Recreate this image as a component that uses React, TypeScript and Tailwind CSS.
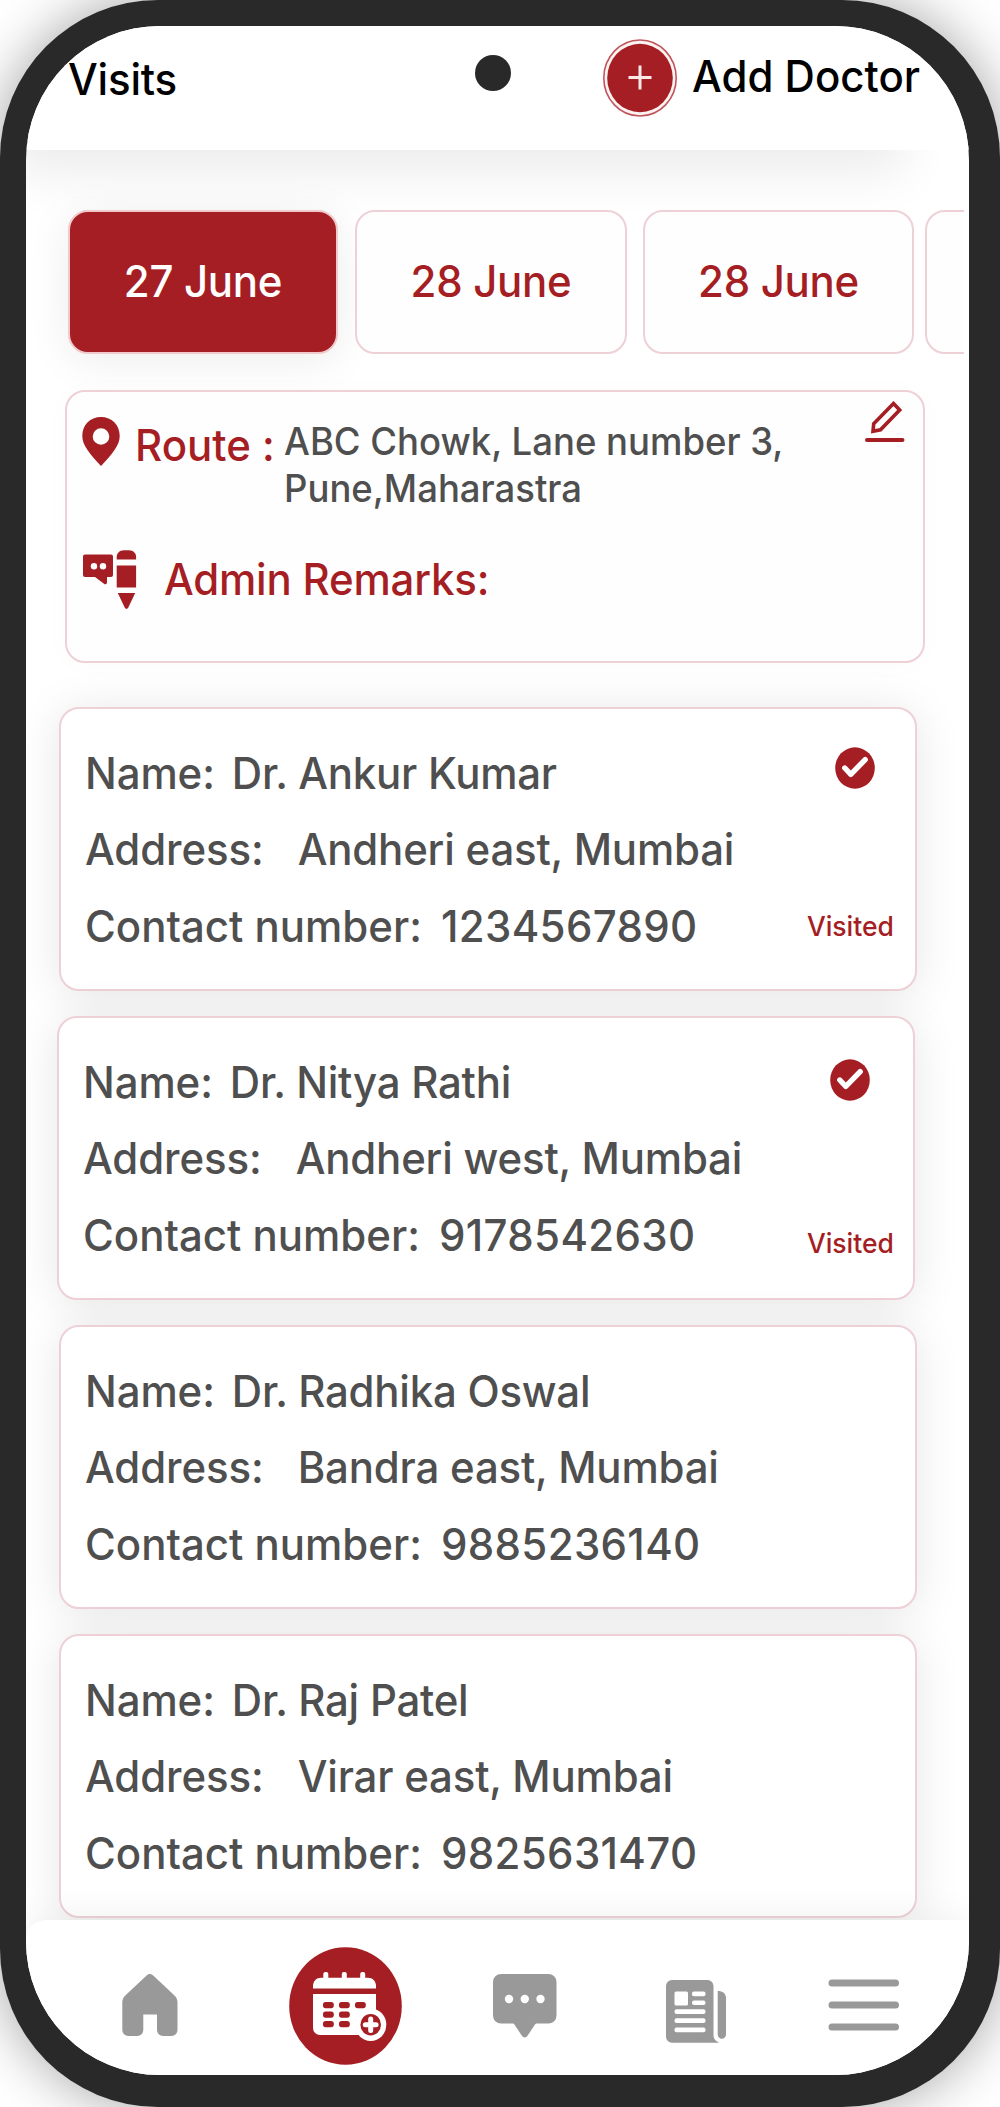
import type { ReactNode } from "react";
import clsx from "clsx";

const TABS = [
  { label: "27 June", className: "w-[270px] mr-[17px]", active: true },
  { label: "28 June", className: "w-[272px] mr-4" },
  { label: "28 June", className: "w-[271px] mr-[11px]" },
  { label: "", className: "w-[270px]" },
];

const VISITS = [
  {
    name: "Dr. Ankur Kumar",
    address: "Andheri east, Mumbai",
    contact: "1234567890",
    className: "ml-[33px]",
    status: "pt-[38px] pb-[43px] pr-[21px]",
    check: "mr-[19px]",
  },
  {
    name: "Dr. Nitya Rathi",
    address: "Andheri west, Mumbai",
    contact: "9178542630",
    className: "ml-[31px]",
    status: "pt-[41px] pb-[35px] pr-[19px]",
    check: "mr-[24px]",
  },
  {
    name: "Dr. Radhika Oswal",
    address: "Bandra east, Mumbai",
    contact: "9885236140",
    className: "ml-[33px]",
  },
  {
    name: "Dr. Raj Patel",
    address: "Virar east, Mumbai",
    contact: "9825631470",
    className: "ml-[33px]",
  },
];

function Text({ className, children }: { className?: string; children: ReactNode }) {
  return (
    <span
      className={clsx(
        "inline-block origin-left scale-y-[1.035] whitespace-pre",
        className
      )}
    >
      {children}
    </span>
  );
}

function PinIcon() {
  return (
    <svg width="38" height="49" viewBox="0 0 38 49" fill="#a51e23">
      <path
        fillRule="evenodd"
        d="M19 0C8.3 0 .3 8 .3 18.8c0 5.600 2 9.400 5.200 14.200C9 38.200 14 43.500 19 49c5-5.500 10-10.800 13.500-16 3.200-4.800 5.200-8.600 5.200-14.200C37.700 8 29.700 0 19 0Zm0 11.200a8.300 8.300 0 1 1 0 16.600 8.300 8.300 0 0 1 0-16.600Z"
      />
    </svg>
  );
}

function RemarksIcon() {
  return (
    <svg width="54" height="60" viewBox="0 0 54 60" fill="#a51e23">
      <path d="M2 4.500h26a2 2 0 0 1 2 2V25a2 2 0 0 1-2 2h-4v5c0 2-1.500 3-3 1.800L12 27H2a2 2 0 0 1-2-2V6.500a2 2 0 0 1 2-2Z" />
      <circle cx="11" cy="16.200" r="3.200" fill="#fff" />
      <circle cx="20" cy="16.200" r="3.200" fill="#fff" />
      <path d="M33.700 9.500V7c0-4 3-6.800 7-6.800h5.400c4 0 7 2.800 7 6.800v2.500Z" />
      <path d="M33.700 15.500h19.400v22H33.700Z" />
      <path d="M34.800 43h17.400l-7 14.800c-.8 1.500-2.600 1.500-3.400 0Z" />
    </svg>
  );
}

function EditIcon() {
  return (
    <svg width="40" height="42" viewBox="0 0 40 42" fill="none" stroke="#a51e23">
      <path
        d="M28.500 2.500 34.700 9 15.500 28.800 8 30.300l.7-7.600Z"
        strokeWidth="3.600"
        strokeLinejoin="miter"
      />
      <path d="M2 39h35.500" strokeWidth="4" strokeLinecap="round" />
    </svg>
  );
}

function CheckIcon() {
  return (
    <svg width="40" height="42" viewBox="0 0 40 42">
      <ellipse cx="20" cy="21" rx="19.800" ry="20.700" fill="#a51e23" />
      <path
        d="m9.800 21 6 6.300L30.200 12.600"
        fill="none"
        stroke="#fff"
        strokeWidth="5.400"
        strokeLinecap="round"
        strokeLinejoin="round"
      />
    </svg>
  );
}

function AddIcon() {
  return (
    <svg width="74" height="78" viewBox="0 0 74 78">
      <ellipse cx="37" cy="39" rx="36.200" ry="38" fill="#fdf3f2" stroke="#c0565c" strokeWidth="1.600" />
      <ellipse cx="37" cy="39" rx="32.800" ry="34.200" fill="#a51e23" />
      <path d="M25.500 38.500h23M37 26.500v24" stroke="#fbe9e9" strokeWidth="3" />
    </svg>
  );
}

function HomeIcon() {
  return (
    <svg width="56" height="62" viewBox="0 0 56 62" fill="#999">
      <path d="M31.200 1.400 52.500 21.500C54.600 23.500 55.500 25.500 55.500 28.500V56a6 6 0 0 1-6 6H41a6 6 0 0 1-6-6V40.500H21.300V56a6 6 0 0 1-6 6H6.300a6 6 0 0 1-6-6V28.500c0-3 .9-5 3-7L24.600 1.400c2.100-1.900 4.500-1.900 6.600 0Z" />
    </svg>
  );
}

function CalendarIcon() {
  const cells = [
    [34, 55], [50, 55], [66, 55],
    [34, 64.5], [50, 64.5],
    [34, 74], [50, 74],
  ];
  return (
    <svg width="113" height="118" viewBox="0 0 113 118">
      <ellipse cx="56.500" cy="59" rx="56.300" ry="58.700" fill="#a51e23" />
      <g fill="#fff">
        <path d="M24 41.500V39c0-5 3.500-8.300 8-8.300h47c4.500 0 8 3.300 8 8.300v2.500Z" />
        <rect x="34.300" y="25" width="5" height="9" rx="2" />
        <rect x="52.800" y="25" width="5" height="9" rx="2" />
        <rect x="71.200" y="25" width="5" height="9" rx="2" />
        <path d="M24 47h63v34a7 7 0 0 1-7 7H31a7 7 0 0 1-7-7Z" />
      </g>
      {cells.map(([x, y]) => (
        <rect key={`${x}-${y}`} x={x} y={y} width="10.800" height="6.200" rx="2.600" fill="#a51e23" />
      ))}
      <ellipse cx="81.700" cy="77.700" rx="15.600" ry="16.300" fill="#fff" />
      <ellipse cx="81.700" cy="77.700" rx="10.300" ry="10.800" fill="#a51e23" />
      <path
        d="M76.300 77.700h10.800M81.700 72v11.400"
        stroke="#fff"
        strokeWidth="5"
        strokeLinecap="round"
      />
    </svg>
  );
}

function ChatIcon() {
  return (
    <svg width="64" height="64" viewBox="0 0 64 64">
      <path
        fill="#999"
        d="M8 0h47.500a8 8 0 0 1 8 8v33.500a8 8 0 0 1-8 8H44c-1 0-1.600.5-2.200 1.300l-7.300 11c-1.600 2.300-4 2.300-5.600 0l-7.300-11c-.6-.8-1.200-1.300-2.200-1.300H8a8 8 0 0 1-8-8V8a8 8 0 0 1 8-8Z"
      />
      <circle cx="16" cy="25" r="4.200" fill="#fff" />
      <circle cx="31.800" cy="25" r="4.200" fill="#fff" />
      <circle cx="47.500" cy="25" r="4.200" fill="#fff" />
    </svg>
  );
}

function NewsIcon() {
  return (
    <svg width="60" height="63" viewBox="0 0 60 63">
      <path
        fill="#999"
        d="M6 0h35.500a6 6 0 0 1 6 6v49c0 4 2.500 6.500 6 7.700H6a6 6 0 0 1-6-6V6a6 6 0 0 1 6-6ZM51.700 11c5 0 8.300 2.500 8.300 7v36.500a4.150 4.150 0 0 1-8.300 0Z"
      />
      <g fill="#fff">
        <rect x="8.500" y="11.500" width="13.500" height="14" rx="1.500" />
        <rect x="26" y="11.500" width="13.500" height="4.700" rx="2" />
        <rect x="26" y="20.400" width="13.500" height="4.700" rx="2" />
        <rect x="8.500" y="29.200" width="31" height="4.800" rx="2" />
        <rect x="8.500" y="38.300" width="31" height="4.800" rx="2" />
        <rect x="8.500" y="47.400" width="31" height="4.800" rx="2" />
      </g>
    </svg>
  );
}

function MenuIcon() {
  return (
    <svg width="72" height="52" viewBox="0 0 72 52" stroke="#999" strokeWidth="7" strokeLinecap="round">
      <path d="M4 4h63.500M4 26h63.500M4 48h63.500" />
    </svg>
  );
}

function Header() {
  return (
    <header className="relative isolate shrink-0 text-black">
      {/* the shadow stops short of the right edge */}
      <span className="absolute inset-y-0 right-[60px] -left-5 -z-10 shadow-[0_28px_50px_-4px_rgba(0,0,0,0.075)]" />
      <div className="flex h-[124px] rounded-bl-[16px] bg-white pr-14 pl-[42px]">
        <Text className="mt-[23px] h-15 leading-[60px] tracking-[-0.2px]">Visits</Text>
        <div className="ml-auto flex items-start">
          <div className="mt-[13px] mr-[15px]">
            <AddIcon />
          </div>
          <Text className="-mr-[7px] mt-5 h-15 leading-[60px]">Add Doctor</Text>
        </div>
      </div>
    </header>
  );
}

function DateTabs() {
  return (
    <div className="relative mt-[60px] mr-[5px] flex shrink-0 overflow-x-clip pl-[42px]">
      {TABS.map((tab, i) => (
        <button
          key={i}
          className={clsx(
            "h-36 shrink-0 rounded-[20px] border-2 pb-[3px]",
            tab.active
              ? "border-[#f0c9cb] bg-[#a51e23] text-white shadow-[0_6px_44px_rgba(0,0,0,0.08)]"
              : "border-[#edd1d6] bg-[#fefefe] text-[#a51e23]",
            tab.className
          )}
        >
          <Text className="tracking-[-0.3px]">{tab.label}</Text>
        </button>
      ))}
    </div>
  );
}

function RouteCard() {
  return (
    <section className="relative mt-9 ml-[39px] flex h-[273px] w-[860px] shrink-0 rounded-[20px] border-2 border-[#edd1d6] bg-[#fefefe] pl-[15px] text-[#a51e23] shadow-[0_2px_30px_rgba(0,0,0,0.02)]">
      <div className="flex-1">
        <div className="flex">
          <div className="mt-[25px]">
            <PinIcon />
          </div>
          <Text className="mt-[24px] ml-[15px] w-[149px] leading-[60px]">Route :</Text>
          <Text className="mt-[27px] text-[36.5px] leading-[46px] text-[#4f4f4f]">
            {"ABC Chowk, Lane number 3,\nPune,Maharastra"}
          </Text>
        </div>
        <div className="mt-[39px] ml-px flex">
          <RemarksIcon />
          <Text className="-mt-[1px] ml-[27px] h-15 leading-[60px] tracking-[-0.2px]">
            Admin Remarks:
          </Text>
        </div>
      </div>
      <div className="mt-[9px] mr-[18px]">
        <EditIcon />
      </div>
    </section>
  );
}

function VisitCard({ visit }: { visit: (typeof VISITS)[number] }) {
  return (
    <article
      className={clsx(
        "flex h-[284px] w-[858px] shrink-0 rounded-[20px] border-2 border-[#edd1d6] bg-white shadow-[0_4px_46px_rgba(0,0,0,0.1)]",
        visit.className
      )}
    >
      <div className="flex-1 pt-[26px] pl-6 leading-[76px] text-[#4f4f4f]">
        <div className="flex h-[76px]">
          <Text className="tracking-[-0.1px]">Name:</Text>
          <Text className="ml-[17px] tracking-[-0.25px]">{visit.name}</Text>
        </div>
        <div className="flex h-[77px]">
          <Text className="tracking-[-0.1px]">Address:</Text>
          <Text className="ml-[34px] tracking-[-0.2px]">{visit.address}</Text>
        </div>
        <div className="flex h-[76px]">
          <Text>Contact number:</Text>
          <Text className="ml-[19px] tracking-[0.35px]">{visit.contact}</Text>
        </div>
      </div>
      {visit.status && (
        <div className={clsx("flex flex-col items-end justify-between text-[#a51e23]", visit.status)}>
          <div className={visit.check}>
            <CheckIcon />
          </div>
          <Text className="h-10 text-[26.5px] leading-10">Visited</Text>
        </div>
      )}
    </article>
  );
}

function BottomNav() {
  return (
    <nav className="relative z-10 mt-0.5 flex flex-1 items-start rounded-tl-[20px] bg-white pl-24 shadow-[0_-4px_36px_rgba(0,0,0,0.06)]">
      <div className="mt-[54px]">
        <HomeIcon />
      </div>
      <div className="mt-[27px] ml-[111px]">
        <CalendarIcon />
      </div>
      <div className="mt-[54px] ml-[91px]">
        <ChatIcon />
      </div>
      <div className="mt-[60px] ml-[109px]">
        <NewsIcon />
      </div>
      <div className="mt-[59px] ml-[102px]">
        <MenuIcon />
      </div>
    </nav>
  );
}

export default function App() {
  return (
    <div className="h-[2107px] w-[1000px] overflow-hidden bg-white font-['Inter',sans-serif] text-[42px] font-[460] [&_svg]:block">
      <div className="relative h-full w-full rounded-[158px] bg-[#292929] pt-[26px] pr-[31px] pb-8 pl-[26px] shadow-[0_0_56px_rgba(0,0,0,0.36)]">
        <div className="flex h-full flex-col overflow-hidden rounded-[134px] bg-white">
          <Header />
          <DateTabs />
          <RouteCard />
          <main className="mt-11 flex flex-col gap-[25px]">
            {VISITS.map((visit) => (
              <VisitCard key={visit.name} visit={visit} />
            ))}
          </main>
          <BottomNav />
        </div>
        <span className="absolute top-[55px] left-[475px] size-9 rounded-full bg-[#292929]" />
      </div>
    </div>
  );
}
